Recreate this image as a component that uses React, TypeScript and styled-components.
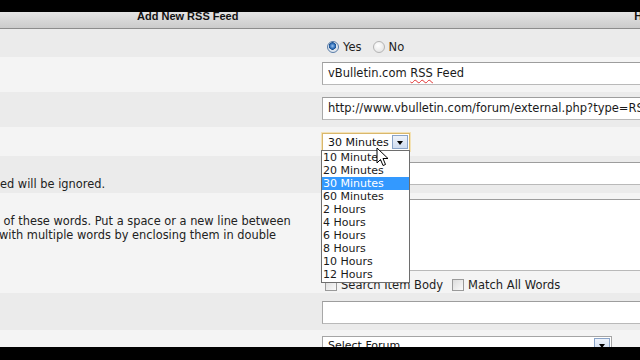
import styled, { createGlobalStyle } from 'styled-components';

const GlobalStyle = createGlobalStyle`
  html, body {
    margin: 0;
    padding: 0;
    background: #000;
  }
`;

const INTERVALS = [
  '10 Minutes',
  '20 Minutes',
  '30 Minutes',
  '60 Minutes',
  '2 Hours',
  '4 Hours',
  '6 Hours',
  '8 Hours',
  '10 Hours',
  '12 Hours',
];

const App = () => {
  return (
    <Page>
      <GlobalStyle />
      <Letterbox $h={12} />
      <Frame>
        <Header>
          <HeaderTitle>Add New RSS Feed</HeaderTitle>
          <HeaderAside>Help</HeaderAside>
        </Header>

        <Row $alt $h={28}>
          <LabelCell />
          <FieldCell $top={11}>
            <RadioGroup>
              <RadioItem>
                <Radio $checked />
                Yes
              </RadioItem>
              <RadioItem>
                <Radio />
                No
              </RadioItem>
            </RadioGroup>
          </FieldCell>
        </Row>

        <Row $h={35}>
          <LabelCell />
          <FieldCell $top={5}>
            <TextInput>
              vBulletin.com <Misspelled>RSS</Misspelled> Feed
            </TextInput>
          </FieldCell>
        </Row>

        <Row $alt $h={35}>
          <LabelCell />
          <FieldCell $top={5}>
            <TextInput>
              http://www.vbulletin.com/forum/external.php?type=RSS2&amp;forumids=1
            </TextInput>
          </FieldCell>
        </Row>

        <Row $h={29}>
          <LabelCell />
          <FieldCell $top={6}>
            <SelectWrap>
              <Select $w={88} $focused>
                <span>30 Minutes</span>
                <ArrowButton />
              </Select>
              <Listbox>
                {INTERVALS.map((item) => (
                  <ListOption key={item} $active={item === '30 Minutes'}>
                    {item}
                  </ListOption>
                ))}
              </Listbox>
              <Pointer width="13" height="20" viewBox="0 0 13 20">
                <path
                  d="M1 1 L1 16 L4.5 12.5 L7 18.5 L9.5 17.5 L7 11.5 L12 11.5 Z"
                  fill="#fff"
                  stroke="#000"
                  strokeWidth="1"
                  strokeLinejoin="round"
                />
              </Pointer>
            </SelectWrap>
          </FieldCell>
        </Row>

        <Row $alt $h={37}>
          <LabelCell $pad={21}>ed will be ignored.</LabelCell>
          <FieldCell $top={6}>
            <TextInput />
          </FieldCell>
        </Row>

        <Row $h={100}>
          <LabelCell $pad={21}>
            &nbsp;of these words. Put a space or a new line between
            <br />
            <Shift>with multiple words by enclosing them in double</Shift>
          </LabelCell>
          <FieldCell $top={6}>
            <TextArea />
            <CheckRow>
              <CheckItem>
                <Checkbox />
                Search Item Body
              </CheckItem>
              <CheckItem>
                <Checkbox />
                Match All Words
              </CheckItem>
            </CheckRow>
          </FieldCell>
        </Row>

        <Row $alt $h={37}>
          <LabelCell />
          <FieldCell $top={8}>
            <TextInput />
          </FieldCell>
        </Row>

        <Row $h={20}>
          <LabelCell />
          <FieldCell $top={6}>
            <Select $w={290}>
              <span>Select Forum</span>
              <ArrowButton />
            </Select>
          </FieldCell>
        </Row>
      </Frame>
      <Letterbox $h={13} />
    </Page>
  );
};

const Page = styled.div`
  width: 640px;
  height: 360px;
  overflow: hidden;
  background: #000;
  display: flex;
  flex-direction: column;
  font-family: 'DejaVu Sans', Verdana, sans-serif;
  color: #1e1e1e;
`;

const Letterbox = styled.div<{ $h: number }>`
  flex: 0 0 ${({ $h }) => $h}px;
  background: #000;
`;

const Frame = styled.div`
  flex: 1;
  overflow: hidden;
  background: #f4f4f4;
  display: flex;
  flex-direction: column;
`;

const Header = styled.div`
  flex: 0 0 16px;
  display: flex;
  align-items: center;
  overflow: hidden;
  background: linear-gradient(#e4e4e4, #cbcbcb);
  border-bottom: 1px solid #8c8c8c;
  font-family: 'Liberation Sans', Arial, sans-serif;
  font-weight: bold;
  font-size: 11px;
  color: #111;
`;

const HeaderTitle = styled.span`
  padding-left: 137px;
  margin-top: -8px;
`;

const HeaderAside = styled.span`
  margin-left: auto;
  margin-right: -18px;
  margin-top: -8px;
`;

const Row = styled.div<{ $alt?: boolean; $h: number }>`
  flex: 0 0 ${({ $h }) => $h}px;
  display: grid;
  grid-template-columns: 322px 1fr;
  background: ${({ $alt }) => ($alt ? '#ebebeb' : '#f4f4f4')};
`;

const LabelCell = styled.div<{ $pad?: number }>`
  padding-top: ${({ $pad }) => $pad ?? 0}px;
  font-size: 11.4px;
  line-height: 14px;
  white-space: nowrap;
  overflow: hidden;
  color: #222;
`;

const Shift = styled.span`
  margin-left: -1px;
`;

const FieldCell = styled.div<{ $top: number }>`
  padding-top: ${({ $top }) => $top}px;
  display: flex;
  flex-direction: column;
  align-items: flex-start;
  font-size: 11.5px;
`;

const RadioGroup = styled.div`
  display: flex;
  align-items: center;
  gap: 11px;
  padding-left: 5px;
  font-size: 11.5px;
`;

const RadioItem = styled.label`
  display: flex;
  align-items: center;
  gap: 4px;
`;

const Radio = styled.span<{ $checked?: boolean }>`
  width: 10px;
  height: 10px;
  border-radius: 50%;
  border: 1px solid ${({ $checked }) => ($checked ? '#5a7da8' : '#b4b4b4')};
  background: ${({ $checked }) =>
    $checked
      ? 'radial-gradient(circle at 45% 40%, #9cc3ef 0, #2f6fb8 2.5px, #1c4f8c 3.5px, #dfe6ee 4px)'
      : 'radial-gradient(circle at 40% 35%, #ffffff, #dedede)'};
`;

const TextInput = styled.div`
  box-sizing: border-box;
  width: 340px;
  height: 23px;
  padding: 0 5px;
  line-height: 21px;
  white-space: nowrap;
  overflow: hidden;
  background: #fff;
  border: 1px solid #b9b9b9;
  border-top-color: #9d9d9d;
  border-left-color: #a8a8a8;
  font-size: 11.5px;
  color: #1a1a1a;
`;

const Misspelled = styled.span`
  text-decoration: underline wavy #e03030;
  text-decoration-thickness: 1px;
  text-underline-offset: 2px;
`;

const TextArea = styled.div`
  box-sizing: border-box;
  width: 340px;
  height: 72px;
  background: #fff;
  border: 1px solid #b9b9b9;
  border-top-color: #9d9d9d;
`;

const CheckRow = styled.div`
  display: flex;
  align-items: center;
  gap: 9px;
  margin-top: 7px;
  padding-left: 3px;
  font-size: 11.5px;
`;

const CheckItem = styled.label`
  display: flex;
  align-items: center;
  gap: 4px;
`;

const Checkbox = styled.span`
  box-sizing: border-box;
  width: 12px;
  height: 12px;
  border: 1px solid #9a9a9a;
  background: linear-gradient(135deg, #dcdcdc, #fafafa);
`;

const SelectWrap = styled.div`
  position: relative;
`;

const Select = styled.div<{ $w: number; $focused?: boolean }>`
  box-sizing: border-box;
  width: ${({ $w }) => $w}px;
  height: 18px;
  padding: 0 1px 0 5px;
  display: flex;
  align-items: center;
  justify-content: space-between;
  background: #fff;
  border: 1px solid ${({ $focused }) => ($focused ? '#d9b76c' : '#a5a5a5')};
  box-shadow: ${({ $focused }) => ($focused ? '0 0 0 1px #f3e2b5' : 'none')};
  font-size: 11px;
  color: #111;
`;

const ArrowButton = styled.span`
  box-sizing: border-box;
  width: 16px;
  height: 14px;
  display: flex;
  align-items: center;
  justify-content: center;
  background: linear-gradient(#eef3fb, #cfdcef);
  border: 1px solid #8aa4c8;

  &::after {
    content: '';
    border-left: 3.5px solid transparent;
    border-right: 3.5px solid transparent;
    border-top: 4px solid #000;
    margin-top: 1px;
  }
`;

const Listbox = styled.div`
  position: absolute;
  z-index: 5;
  top: 17px;
  left: -1px;
  box-sizing: border-box;
  width: 89px;
  padding-bottom: 1px;
  background: #fff;
  border: 1px solid #6e6e6e;
  font-size: 11px;
`;

const ListOption = styled.div<{ $active?: boolean }>`
  height: 13px;
  line-height: 13px;
  padding-left: 1px;
  background: ${({ $active }) => ($active ? '#3399ff' : 'transparent')};
  color: ${({ $active }) => ($active ? '#fff' : '#1a1a1a')};
`;

const Pointer = styled.svg`
  position: absolute;
  z-index: 6;
  left: 54px;
  top: 14px;
`;

export default App;
